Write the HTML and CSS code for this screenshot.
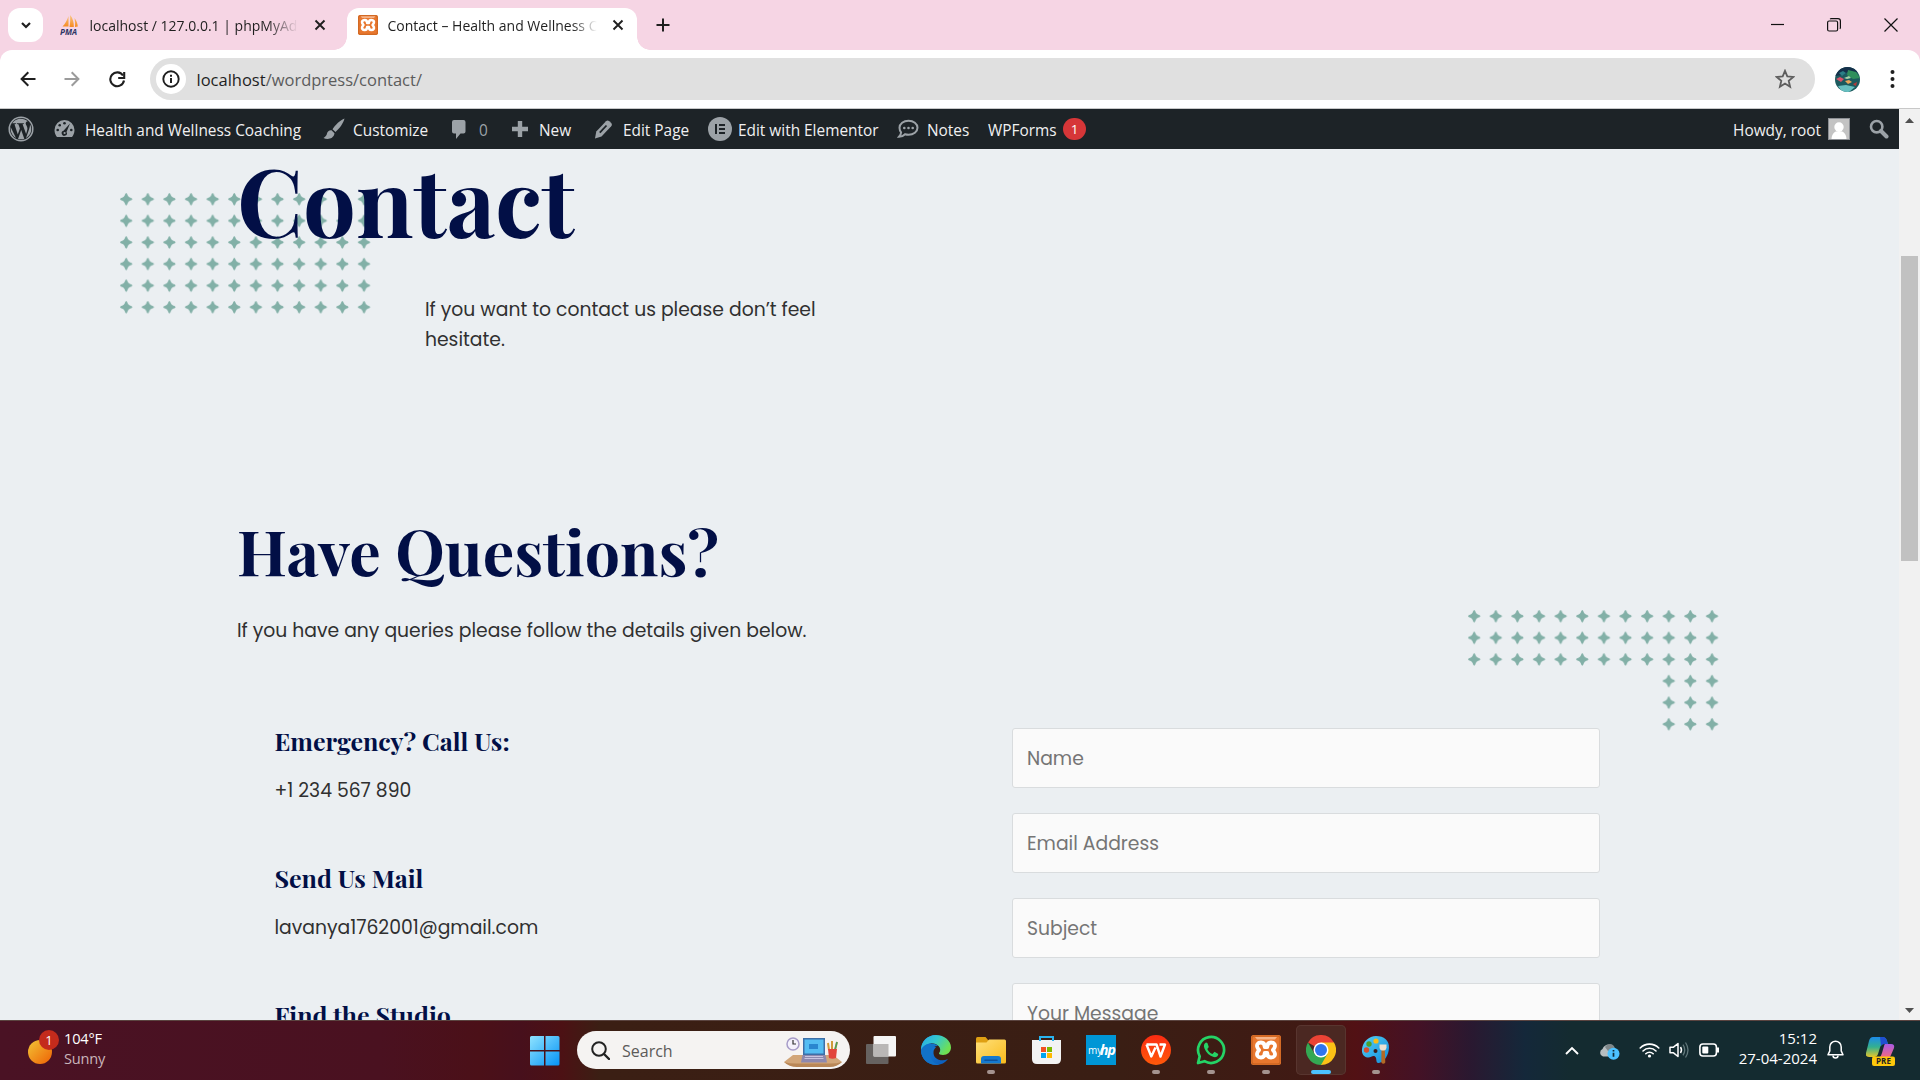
FILE: index.html
```
<!DOCTYPE html>
<html lang="en">
<head>
<meta charset="utf-8">
<title>Contact – Health and Wellness Coaching</title>
<link rel="stylesheet" href="styles.css">
</head>
<body>
<svg class="defs" width="0" height="0" aria-hidden="true">
  <defs>
    <pattern id="stars" width="21.62" height="21.6" patternUnits="userSpaceOnUse">
      <path d="M6.200 0Q7.200.3 7.600 2.200 8.300 4 10.200 4.700 12 5.100 12.400 6.200 12 7.300 10.200 7.700 8.300 8.400 7.600 10.200 7.200 12.100 6.200 12.400 5.200 12.100 4.800 10.200 4.100 8.400 2.200 7.700.4 7.300 0 6.200.4 5.100 2.200 4.700 4.100 4 4.800 2.200 5.200.3 6.200 0z" fill="#82b0a7"/>
    </pattern>
    <symbol id="xampp" viewBox="0 0 30 30">
      <rect width="30" height="30" rx="2.500" fill="#e8772e"/>
      <rect x="1" y="1" width="28" height="28" rx="2" fill="none" stroke="#c05f1c" stroke-width="1"/>
      <path d="M4 2h22l-2 2.500H6z" fill="#f6b58a"/>
      <path d="M10 7.500c-3.500 0-4.500 2.500-3.700 4.600.5 1.300 1.200 1.900 1.800 2.900-.6 1-1.300 1.600-1.800 2.900-.8 2.100.2 4.600 3.700 4.600 3.200 0 3.700-2.500 3.700-4.500h2.600c0 2 .5 4.500 3.700 4.500 3.500 0 4.500-2.500 3.700-4.600-.5-1.300-1.200-1.900-1.800-2.900.6-1 1.300-1.600 1.800-2.900.8-2.100-.2-4.600-3.700-4.600-3.200 0-3.700 2.500-3.700 4.500h-2.600c0-2-.5-4.500-3.700-4.500z" fill="none" stroke="#fff" stroke-width="3.800" stroke-linejoin="round"/>
    </symbol>
    <linearGradient id="gWin" x1="0" y1="0" x2="1" y2="1"><stop offset="0" stop-color="#8fe3ff"/><stop offset="1" stop-color="#0593f5"/></linearGradient>
    <linearGradient id="gSun" x1="0" y1="0" x2="1" y2="1"><stop offset="0" stop-color="#f3c436"/><stop offset="1" stop-color="#ee6104"/></linearGradient>
    <linearGradient id="gSail" x1="0" y1="0" x2="0" y2="1"><stop offset="0" stop-color="#f9c784"/><stop offset="1" stop-color="#f58a1f"/></linearGradient>
    <linearGradient id="gFolder" x1="0" y1="0" x2="1" y2="1"><stop offset="0" stop-color="#ffe07a"/><stop offset="1" stop-color="#f8bb1c"/></linearGradient>
    <linearGradient id="gEdge" x1="0" y1="0" x2="1" y2=".5"><stop offset="0" stop-color="#27a8e8"/><stop offset=".5" stop-color="#34c8cf"/><stop offset="1" stop-color="#6fe052"/></linearGradient>
    <linearGradient id="gEdge2" x1="0" y1="0" x2="1" y2="1"><stop offset="0" stop-color="#1b86e0"/><stop offset="1" stop-color="#0b5bb8"/></linearGradient>
    <linearGradient id="gWps" x1="0" y1="0" x2="0" y2="1"><stop offset="0" stop-color="#fb2b12"/><stop offset="1" stop-color="#ff5a0a"/></linearGradient>
    <linearGradient id="gPaint" x1="0" y1="0" x2="1" y2="1"><stop offset="0" stop-color="#54d2f8"/><stop offset="1" stop-color="#1289d8"/></linearGradient>
    <linearGradient id="gCopA" x1="0" y1="0" x2="0" y2="1"><stop offset="0" stop-color="#1c8bea"/><stop offset=".5" stop-color="#33b08f"/><stop offset="1" stop-color="#e6c52a"/></linearGradient>
    <linearGradient id="gCopB" x1="0" y1="0" x2="0" y2="1"><stop offset="0" stop-color="#a95be6"/><stop offset="1" stop-color="#f6697b"/></linearGradient>
    <clipPath id="disc"><circle cx="12.500" cy="12.500" r="12.500"/></clipPath>
  </defs>
</svg>

<div class="screen">
  <header class="tabstrip">
    <button class="tab-search"><svg width="12" height="12" viewBox="0 0 12 12"><path d="M2 4l4 4 4-4" fill="none" stroke="#1f1f1f" stroke-width="2.200"/></svg></button>
    <div class="tab">
      <svg class="favicon" width="20" height="20" viewBox="0 0 20 20"><path d="M8.500 1v10.500H2.500C5 9 7 5.500 8.500 1zM10 0c3 3 4 8 3.800 12H9.500C10.300 8 10.400 4 10 0zM14.500 3c2 2.500 3.200 6 3.300 8.500L15 12c.3-3 .1-6-.5-9z" fill="url(#gSail)"/><text x="0" y="19.500" class="pma-mark">PMA</text></svg>
      <span class="tab-title tab-title-a">localhost / 127.0.0.1 | phpMyAdmin</span>
      <svg class="tab-close" width="12" height="12" viewBox="0 0 12 12"><path d="M1.500 1.500l9 9M10.500 1.500l-9 9" stroke="#1f1f1f" stroke-width="1.900"/></svg>
    </div>
    <div class="tab tab-active">
      <svg class="favicon" width="20" height="20"><use href="#xampp"/></svg>
      <span class="tab-title tab-title-b">Contact – Health and Wellness Coaching</span>
      <svg class="tab-close" width="12" height="12" viewBox="0 0 12 12"><path d="M1.500 1.500l9 9M10.500 1.500l-9 9" stroke="#1f1f1f" stroke-width="1.900"/></svg>
    </div>
    <svg class="new-tab" width="14" height="14" viewBox="0 0 14 14"><path d="M7 .5v13M.5 7h13" stroke="#1f1f1f" stroke-width="2"/></svg>
    <div class="window-controls">
      <svg width="14" height="14" viewBox="0 0 14 14"><path d="M1 6.500h13" stroke="#111" stroke-width="1.200"/></svg>
      <svg width="14" height="14" viewBox="0 0 14 14"><rect x=".6" y="3" width="10" height="10" rx="1.500" fill="none" stroke="#111" stroke-width="1.200"/><path d="M3.200 1.200q.3-.6 1-.6H11q2.400 0 2.400 2.400v6.800q0 .6-.6 1" fill="none" stroke="#111" stroke-width="1.200"/></svg>
      <svg width="14" height="14" viewBox="0 0 14 14"><path d="M.5.500l13 13M13.500.500l-13 13" stroke="#111" stroke-width="1.200"/></svg>
    </div>
  </header>

  <nav class="toolbar">
    <svg class="nav-back" width="16" height="16" viewBox="0 0 16 16"><path d="M15.500 8H2M8.300 1.300L1.600 8l6.700 6.700" fill="none" stroke="#1f1f1f" stroke-width="2"/></svg>
    <svg class="nav-forward" width="16" height="16" viewBox="0 0 16 16"><path d="M.5 8H14M7.700 1.300L14.400 8l-6.700 6.700" fill="none" stroke="#9b9b9b" stroke-width="2"/></svg>
    <svg class="nav-reload" width="17" height="17" viewBox="0 0 17 17"><path d="M15 9.500A6.900 6.900 0 1 1 14 4.500" fill="none" stroke="#1f1f1f" stroke-width="2.100"/><path d="M15.200 1v6h-6" fill="none" stroke="#1f1f1f" stroke-width="2.100"/></svg>
    <div class="omnibox">
      <span class="site-info"><svg width="18" height="18" viewBox="0 0 18 18"><circle cx="9" cy="9" r="7.700" fill="none" stroke="#1f1f1f" stroke-width="1.900"/><path d="M9 8v5M9 4.800v2" stroke="#1f1f1f" stroke-width="2"/></svg></span>
      <span class="url"><b>localhost</b>/wordpress/contact/</span>
      <svg class="star" width="20" height="20" viewBox="0 0 20 20"><path d="M10 1.800l2.300 5.600 6 .5-4.600 3.900 1.400 5.900L10 14.500l-5.100 3.200 1.400-5.900L1.700 7.900l6-.5z" fill="none" stroke="#5e5e5e" stroke-width="1.800"/></svg>
    </div>
    <svg class="profile" width="25" height="25" viewBox="0 0 25 25"><g clip-path="url(#disc)"><rect width="25" height="25" fill="#1c5a5e"/><path d="M0 0h25v6L14 4 8 8 0 9z" fill="#14304a"/><path d="M13 3l8 2 4 6-7 1-6-4z" fill="#2f8f5c"/><path d="M1 12l4-2 4 2-3 3z" fill="#d8526a"/><path d="M10 14l4-1 3 2-4 2z" fill="#e9a55a"/><path d="M18 17l4-2-1 4-2-1z" fill="#b33a3a"/><path d="M3 19l8-1 9 2-6 5H7z" fill="#67bfc0"/><path d="M9 11l5-2 2 2-4 1z" fill="#a5d3a8"/><path d="M4 6l4-2 3 2-4 3z" fill="#2a7f86"/></g></svg>
    <svg class="kebab" width="5" height="18" viewBox="0 0 5 18"><circle cx="2.500" cy="2" r="2"/><circle cx="2.500" cy="9" r="2"/><circle cx="2.500" cy="16" r="2"/></svg>
  </nav>

  <div class="viewport">
    <div class="page">
      <div class="adminbar">
        <svg class="ab-wp" width="26" height="26" viewBox="0 0 26 26"><circle cx="13" cy="13" r="11.800" fill="none" stroke="#9ca2a7" stroke-width="1.500"/><path d="M3 9.300C4.700 5.300 8.500 2.700 13 2.700c2.600 0 5 1 6.800 2.500-1.600.2-2.300 1.400-2.100 2.600.2 1.400 1.700 2.400 1.700 4.700 0 1.500-.7 3.500-1.300 5.500L14.600 8.300l1.300-.2v-.8H8.900v.8l1.500.2 1.500 4.100-2.100 6.100L6.500 8.300l1.400-.2v-.8H4.300z" fill="#9ca2a7"/><path d="M2.600 11L8 22C4.800 20.200 2.600 16.900 2.600 13zM13.200 14l3.100 8.700c-2 .8-4.300.8-6.300.2zM22 8.300c2.700 5 1 10.900-4 13.800l3-8.600c.7-2 1-3.600 1-5.200z" fill="#9ca2a7"/></svg>
        <svg class="ab-gauge" width="21" height="20" viewBox="0 0 21 20"><path d="M10.500 1A10 10 0 0 0 .5 11c0 3 1.200 5.400 2.500 7h15c1.300-1.600 2.500-4 2.500-7a10 10 0 0 0-10-10z" fill="#9ca2a7"/><g fill="#1d2327"><circle cx="10.500" cy="4.200" r="1.300"/><circle cx="5.700" cy="6.200" r="1.300"/><circle cx="3.700" cy="11" r="1.300"/><circle cx="17.300" cy="11" r="1.300"/><path d="M16 4.500l-3.500 8.400a2.600 2.600 0 1 1-3-1.100z"/></g><circle cx="10.600" cy="14" r="1.100" fill="#9ca2a7"/></svg>
        <span class="ab-site">Health and Wellness Coaching</span>
        <svg class="ab-brush" width="22" height="22" viewBox="0 0 22 22"><path d="M21.500.5c-4 1.500-9.500 6.500-12 10.800l3 2.700C16.500 10.500 20.500 5 21.500.5zM8.500 12.300c-2.500-.2-4 1.200-4.500 3.300-.5 2-1.500 3.400-3.500 4.400 3.500 1.800 10 1.500 11-4.700z" fill="#9ca2a7"/></svg>
        <span class="ab-customize">Customize</span>
        <svg class="ab-comment" width="18" height="21" viewBox="0 0 18 21"><path d="M3 1h9.500A2 2 0 0 1 14.500 3v9.500a2 2 0 0 1-2 2H9.500L5 20v-5.500H3a2 2 0 0 1-2-2V3a2 2 0 0 1 2-2z" fill="#9ca2a7"/></svg>
        <span class="ab-count">0</span>
        <svg class="ab-plus" width="18" height="18" viewBox="0 0 18 18"><path d="M6.800 1h4.400v5.800H17v4.400h-5.800V17H6.800v-5.800H1V6.800h5.800z" fill="#9ca2a7"/></svg>
        <span class="ab-new">New</span>
        <svg class="ab-pencil" width="19" height="19" viewBox="0 0 19 19"><path d="M12 1.300q1.500-1.500 3.300 0l1.700 1.500q1.700 1.700.2 3.500L7.500 16.400 1 18.500l1.300-7z" fill="#9ca2a7"/><path d="M12.500 5.500L5.800 12.700" stroke="#1d2327" stroke-width="1.800"/></svg>
        <span class="ab-edit">Edit Page</span>
        <svg class="ab-elementor" width="24" height="24" viewBox="0 0 24 24"><circle cx="12" cy="12" r="12" fill="#9ca2a7"/><path d="M7 7h2v10H7zM11 7h6v2h-6zM11 11h6v2h-6zM11 15h6v2h-6z" fill="#1d2327"/></svg>
        <span class="ab-elementor-label">Edit with Elementor</span>
        <svg class="ab-bubble" width="22" height="20" viewBox="0 0 22 20"><path d="M11.500 1.700c5 0 9 3 9 7s-4 7-9 7c-1.200 0-2.400-.2-3.400-.5-1.600 1.600-3.700 2.600-6.100 2.600 1.300-1.300 2-2.700 2.100-4.400C3 12 2.500 10.500 2.500 8.700c0-4 4-7 9-7z" fill="none" stroke="#9ca2a7" stroke-width="2"/><circle cx="7.300" cy="9" r="1.300" fill="#9ca2a7"/><circle cx="11.500" cy="9" r="1.300" fill="#9ca2a7"/><circle cx="15.700" cy="9" r="1.300" fill="#9ca2a7"/></svg>
        <span class="ab-notes">Notes</span>
        <span class="ab-wpforms">WPForms</span>
        <span class="ab-badge">1</span>
        <span class="ab-howdy">Howdy, root</span>
        <svg class="ab-avatar" width="22" height="22" viewBox="0 0 22 22"><rect x=".5" y=".5" width="21" height="21" fill="#c3c3c3" stroke="#8c8f94"/><circle cx="11" cy="9" r="4.700" fill="#fff"/><path d="M3.500 21c.3-4.500 2.500-8 7.500-8s7.200 3.500 7.500 8z" fill="#fff"/></svg>
        <svg class="ab-search" width="20" height="20" viewBox="0 0 20 20"><circle cx="7.700" cy="7.700" r="5.700" fill="none" stroke="#9ca2a7" stroke-width="2.600"/><path d="M12 12l5.500 5.500" stroke="#9ca2a7" stroke-width="4" stroke-linecap="round"/></svg>
      </div>

      <main class="content">
        <svg class="pattern pattern-top" width="251" height="122" aria-hidden="true"><rect width="251" height="122" fill="url(#stars)"/></svg>
        <svg class="pattern pattern-side" width="251" height="122" aria-hidden="true"><path d="M0 0h251v122h-57V60H0z" fill="url(#stars)"/></svg>
        <h1>Contact</h1>
        <p class="intro">If you want to contact us please don’t feel hesitate.</p>
        <h2>Have Questions?</h2>
        <p class="lead">If you have any queries please follow the details given below.</p>
        <div class="columns">
          <section class="details">
            <div class="detail"><h3>Emergency? Call Us:</h3><p>+1 234 567 890</p></div>
            <div class="detail"><h3>Send Us Mail</h3><p>lavanya1762001@gmail.com</p></div>
            <div class="detail"><h3>Find the Studio</h3></div>
          </section>
          <form class="form">
            <input type="text" placeholder="Name">
            <input type="text" placeholder="Email Address">
            <input type="text" placeholder="Subject">
            <input type="text" placeholder="Your Message">
          </form>
        </div>
      </main>
    </div>
    <div class="scrollbar">
      <svg width="9" height="5" viewBox="0 0 9 5"><path d="M0 5L4.500 0 9 5z" fill="#505050"/></svg>
      <div class="thumb"></div>
      <svg class="down" width="9" height="5" viewBox="0 0 9 5"><path d="M0 0l4.500 5L9 0z" fill="#505050"/></svg>
    </div>
  </div>

  <footer class="taskbar">
    <div class="weather">
      <svg width="32" height="36" viewBox="0 0 32 36"><circle cx="12" cy="23" r="12" fill="url(#gSun)"/><circle cx="21" cy="11" r="10" fill="#c42b1c"/><text x="21" y="15.800" text-anchor="middle" class="weather-badge">1</text></svg>
      <div class="weather-text"><span>104°F</span><span class="dim">Sunny</span></div>
    </div>
    <svg class="start" width="30" height="30" viewBox="0 0 30 30"><path d="M1.500 0H14v14H0V1.500Q0 0 1.500 0zM15.500 0H28q1.500 0 1.500 1.500V14h-14zM0 15.500h14V29.500H1.500Q0 29.500 0 28zM15.500 15.500h14V28q0 1.500-1.500 1.500H15.500z" fill="url(#gWin)"/></svg>
    <div class="search">
      <svg width="19" height="19" viewBox="0 0 19 19"><circle cx="8" cy="8" r="6.800" fill="none" stroke="#222" stroke-width="2"/><path d="M13 13l5 5" stroke="#222" stroke-width="2.400" stroke-linecap="round"/></svg>
      <span>Search</span>
      <svg class="desk" width="60" height="32" viewBox="0 0 60 32"><path d="M10 19h40l9 7q-5 4-12 4H14Q6 30 1 26z" fill="#d2a679"/><path d="M1 26q5 1.500 12 1.500h34q7 0 12-1.500-5 5-12 5H14Q6 31 1 26z" fill="#b98757"/><circle cx="10" cy="8" r="6" fill="#f4f1fb" stroke="#a79cc8" stroke-width="1.500"/><path d="M10 4v4h3" fill="none" stroke="#333" stroke-width="1.200"/><path d="M20 2h22v17H20z" fill="#3c6fa8"/><path d="M21.500 3.500h19v14h-19z" fill="#54bdf2"/><path d="M26 8h9v5h-9z" fill="#2a86cf"/><path d="M19.500 19h23l1.500 7.500H18z" fill="#8d88ae"/><path d="M22 20.500h18M21.500 22.500h19" stroke="#c9c5e0"/><path d="M46 14l-1-7M49 14V5M52 14l2-8" stroke="#d09a3a" stroke-width="2"/><path d="M52 14l2-8" stroke="#4a9d61" stroke-width="1.600"/><path d="M45 13h9l-1 9q-3.500 1.500-7 0z" fill="#e2453c"/></svg>
    </div>
    <div class="apps">
      <div class="app"><svg width="30" height="28" viewBox="0 0 30 28"><rect x="0" y="8" width="22.500" height="20" rx="1" fill="#666260"/><rect x="7.500" y="0" width="22.500" height="20.500" rx="1" fill="#f5f5f5"/><rect x="7.500" y="8" width="15" height="12.500" fill="#b9b7b6"/></svg></div>
      <div class="app"><svg width="30" height="30" viewBox="0 0 30 30"><path d="M15 0C6.500 0 0 6.500 0 15s6.700 15 15 15c5 0 9.300-2.300 12-6-7 3.500-15 0-14.500-7 .1-2 1-3.500 2.500-4.500L9 8z" fill="url(#gEdge2)"/><path d="M0 15C0 6.500 6.500 0 15 0s15 6 15 12.500c0 4.500-3.500 7.500-8 7.500-2.500 0-4.500-.8-4-2 1.500-1.500 1.800-4.500-.2-6.800C13 6 3 8 0 15z" fill="url(#gEdge)"/><path d="M9.500 19c0 6 4 10.500 9 10.500-10 2-18.500-5-18.500-14C2 10.500 6.500 8.300 11 8.500c2.500.1 4.500 1 6 2.600-4-.6-7.500 3-7.500 7.900z" fill="#1272c8"/></svg></div>
      <div class="app running"><svg width="30" height="27" viewBox="0 0 30 27"><path d="M0 1.500Q0 0 1.500 0H9.500l3 3.500V12H0z" fill="#dfa013"/><path d="M0 5.500h10.500L13 2.500h15.500q1.500 0 1.500 1.500v21q0 1.500-1.500 1.500h-27Q0 26.500 0 25z" fill="url(#gFolder)"/><path d="M5 26.500V22q0-3 3-3h14q3 0 3 3v4.500z" fill="#1479cf"/><path d="M9 23.200h12" stroke="#0d529b" stroke-width="1.600" stroke-linecap="round"/></svg></div>
      <div class="app"><svg width="29" height="30" viewBox="0 0 29 30"><path d="M0 5h29v19q0 5-5 5H5q-5 0-5-5z" fill="#f3f3f3"/><path d="M9 12h5v5H9z" fill="#f25022"/><path d="M15 12h5v5h-5z" fill="#7fba00"/><path d="M9 18h5v5H9z" fill="#00a4ef"/><path d="M15 18h5v5h-5z" fill="#ffb900"/><path d="M8 6V2h13v4" fill="none" stroke="#29b4ef" stroke-width="2"/></svg></div>
      <div class="app"><svg width="30" height="30" viewBox="0 0 30 30"><rect width="30" height="30" fill="#0096d6"/><text x="2" y="18.500" class="myhp-a">my</text><text x="14" y="20" class="myhp-b">hp</text></svg></div>
      <div class="app running"><svg width="30" height="30" viewBox="0 0 30 30"><circle cx="15" cy="15" r="15" fill="url(#gWps)"/><path d="M5.500 9.500h10l4 12 4.500-12h-5.500M5.500 9.500l4.800 12 4.200-9" fill="none" stroke="#fff" stroke-width="2.400" stroke-linejoin="round"/></svg></div>
      <div class="app running"><svg width="30" height="30" viewBox="0 0 30 30"><path d="M2 28l1.700-6.700A13 13 0 1 1 8.500 26.200z" fill="none" stroke="#25d366" stroke-width="2.700" stroke-linejoin="round"/><path d="M10 7.500c-2 1-2.700 3.200-1.500 6 1.800 4.200 5 7.400 9.200 8.600 2.300.5 4.300-.8 4.600-3.200l-3.800-2.100-2 2.100c-2.400-.9-4.300-2.800-5.200-5l1.500-1.900-1.400-4z" fill="#25d366"/></svg></div>
      <div class="app running"><svg width="30" height="30"><use href="#xampp"/></svg></div>
      <div class="app running current"><svg width="30" height="30" viewBox="0 0 30 30"><path d="M15 15L2 7.500A15 15 0 0 1 28 7.500z" fill="#ea4335"/><path d="M15 15L28 7.500A15 15 0 0 1 15 30z" fill="#fbc116"/><path d="M15 7.500h13L21.500 19 15 30z" fill="#fbc116"/><path d="M2 7.500A15 15 0 0 0 15 30l6.500-11.200L15 15 8.500 18.800z" fill="#34a853"/><circle cx="15" cy="15" r="7.500" fill="#fff"/><circle cx="15" cy="15" r="6" fill="#2f75ee"/></svg></div>
      <div class="app running"><svg width="30" height="30" viewBox="0 0 30 30"><path d="M15 1c8 0 13.500 4.500 13 12-.4 7-4.500 14-10 15-4 .7-1.500-5-4-6.500-2.500-1.600-4 1.500-7.500 1C2.500 22 .5 18.500 1 14 2 6.500 8 1 15 1z" fill="url(#gPaint)"/><circle cx="15" cy="6" r="2.600" fill="#f9bc16"/><circle cx="8" cy="9" r="2.700" fill="#4ba02c"/><circle cx="5.500" cy="15" r="2.700" fill="#d64f30"/><circle cx="14.500" cy="16" r="2" fill="#3a1b17"/><path d="M20.500 14h3.300l.5 13.500q-2 2.500-4 0z" fill="#b26a26"/><path d="M18.500 9.500h7v3q-.5 3-2.500 3h-2q-2 0-2.500-3z" fill="#ece2d2"/></svg></div>
    </div>
    <div class="tray">
      <svg class="tray-up" width="14" height="9" viewBox="0 0 14 9"><path d="M1 8l6-6 6 6" fill="none" stroke="#fff" stroke-width="1.900"/></svg>
      <svg class="tray-cloud" width="21" height="17" viewBox="0 0 21 17"><path d="M4 13.500a4 4 0 0 1-.5-7.500C5 2 9 .5 12.500 2c2 .8 3 2.300 3.300 4 3 .3 3.700 7.500-.3 7.500z" fill="#b8bec0"/><path d="M6 4C9-.5 15 0 16 6L9 8z" fill="#7f8789"/><circle cx="14.500" cy="10.800" r="6" fill="#4cc2ff"/><path d="M14.500 9.800v4M14.500 7v1.600" stroke="#102a35" stroke-width="1.700"/></svg>
      <svg class="tray-wifi" width="21" height="16" viewBox="0 0 21 16"><g fill="none" stroke="#fff" stroke-width="1.600" stroke-linecap="round"><path d="M1.200 6a13 13 0 0 1 18.600 0M4 9a9.200 9.200 0 0 1 13 0M6.800 11.700a5.300 5.300 0 0 1 7.400 0"/></g><circle cx="10.500" cy="14" r="1.600" fill="#fff"/></svg>
      <svg class="tray-sound" width="20" height="18" viewBox="0 0 20 18"><path d="M1 6.200h3.500L9 2.500v13L4.500 11.800H1z" fill="none" stroke="#fff" stroke-width="1.500" stroke-linejoin="round"/><path d="M11.500 6q2 3 0 6" fill="none" stroke="#fff" stroke-width="1.500"/><path d="M14 3.700q3.500 5.300 0 10.600M16.500 1.500q5 7.500 0 15" fill="none" stroke="#61777a" stroke-width="1.300"/></svg>
      <svg class="tray-battery" width="21" height="14" viewBox="0 0 21 14"><rect x=".9" y="1" width="16.500" height="12" rx="3" fill="none" stroke="#fff" stroke-width="1.600"/><rect x="3.300" y="3.500" width="6" height="7" rx="1" fill="#fff"/><path d="M19 4.500v5" stroke="#fff" stroke-width="2"/></svg>
      <div class="clock"><span>15:12</span><span>27-04-2024</span></div>
      <svg class="tray-bell" width="17" height="20" viewBox="0 0 17 20"><path d="M8.500 1.200a5.700 5.700 0 0 0-5.700 5.700v4L1 14.700h15l-1.800-3.800v-4a5.700 5.700 0 0 0-5.700-5.700z" fill="none" stroke="#fff" stroke-width="1.500" stroke-linejoin="round"/><path d="M6 15.500a2.500 2.500 0 0 0 5 0" fill="none" stroke="#fff" stroke-width="1.500"/></svg>
      <svg class="tray-copilot" width="30" height="29" viewBox="0 0 30 29"><path d="M7 0h9q4 0 5 4l1 3h-4q-3 0-4 3.500L12 17q-1 3-4 3H3q-4 0-3-4L3 4q1-4 4-4z" fill="url(#gCopA)"/><path d="M14 0h3q3 0 4 4l1 3h-4q-2 0-3 2z" fill="#1f4fd0"/><path d="M19 7h6q4 0 3 4l-3 7q-1 3-4 3h-8q2-1 3-5l2-7q.5-2 1-2z" fill="url(#gCopB)"/><rect x="6" y="19.500" width="23" height="9.500" rx="2" fill="#fdc80b"/><text x="17.500" y="27.200" text-anchor="middle" class="pre">PRE</text></svg>
    </div>
  </footer>
</div>
</body>
</html>
```
FILE: styles.css
```
* { box-sizing: border-box; }
body { margin: 0; font-family: "Open Sans", "Noto Sans", sans-serif; }
h1, h2, h3, p { margin: 0; }
svg { display: block; flex: none; }
.defs { position: absolute; }
.screen { width: 1920px; height: 1080px; display: flex; flex-direction: column; overflow: hidden; background: #f6d5e4; }

/* browser tabs */
.tabstrip { height: 50px; flex: none; display: flex; align-items: center; background: #f6d5e4; }
.tab-search { width: 35px; height: 34px; margin-left: 8px; padding: 0; border: 0; border-radius: 12px; background: #fff; display: flex; align-items: center; justify-content: center; }
.tab { display: flex; align-items: center; width: 304px; height: 42px; padding: 0 21px 0 17px; align-self: flex-end; }
.tab-active { position: relative; width: 290px; padding: 0 13px 0 11px; background: #fff; border-radius: 12px 12px 0 0; }
.tab-active::before, .tab-active::after { content: ""; position: absolute; bottom: 0; width: 13px; height: 13px; }
.tab-active::before { left: -13px; background: radial-gradient(circle at 0 0, transparent 12.5px, #fff 13px); }
.tab-active::after { right: -13px; background: radial-gradient(circle at 100% 0, transparent 12.5px, #fff 13px); }
.favicon { margin-bottom: 8px; }
.tab-title { font-size: 14px; line-height: 20px; margin: 0 0 7px 9.5px; white-space: nowrap; overflow: hidden; color: #1f1f1f; }
.tab-title-a { width: 208px; margin-right: auto; -webkit-mask-image: linear-gradient(90deg, #000 85%, transparent); mask-image: linear-gradient(90deg, #000 85%, transparent); }
.tab-title-b { width: 209px; margin-right: auto; -webkit-mask-image: linear-gradient(90deg, #000 88%, transparent); mask-image: linear-gradient(90deg, #000 88%, transparent); }
.tab-close { margin-bottom: 8px; }
.pma-mark { font: italic 700 8px "Open Sans", sans-serif; fill: #2e3564; }
.new-tab { margin-left: 19px; }
.window-controls { margin: 0 22px 0 auto; display: flex; gap: 43px; }

/* address bar */
.toolbar { height: 59px; flex: none; display: flex; align-items: center; background: #fff; border-bottom: 1px solid #c8c8c8; border-radius: 12px 12px 0 0; }
.nav-back { margin-left: 20px; }
.nav-forward { margin-left: 28px; }
.nav-reload { margin-left: 29px; }
.omnibox { display: flex; align-items: center; width: 1665px; height: 42px; margin-left: 24px; padding: 0 20px 0 6px; border-radius: 21px; background: #e0e0e0; }
.site-info { width: 30px; height: 30px; border-radius: 50%; background: #fff; display: flex; align-items: center; justify-content: center; }
.url { margin-left: 10.500px; font-size: 16.5px; color: #5c5c5c; }
.url b { font-weight: 400; color: #1f1f1f; }
.star { margin-left: auto; }
.profile { margin-left: 20px; }
.kebab { margin-left: 30px; fill: #1f1f1f; }

/* page and scrollbar */
.viewport { flex: 1; min-height: 0; display: flex; }
.page { width: 1899px; display: flex; flex-direction: column; overflow: hidden; }
.scrollbar { width: 21px; background: #f1f1f1; display: flex; flex-direction: column; align-items: center; padding: 9px 0 7px; }
.thumb { width: 17px; height: 305px; margin-top: 133px; background: #c1c1c1; }
.down { margin-top: auto; }

/* admin bar */
.adminbar { height: 40px; flex: none; display: flex; align-items: center; background: #1d2327; color: #f0f0f1; font-size: 15.4px; white-space: nowrap; }
.adminbar span { flex: none; line-height: 40px; padding-top: 2px; height: 40px; }
.ab-wp { margin-left: 8px; }
.ab-gauge { margin-left: 20px; }
.ab-site { margin-left: 10px; width: 238px; }
.ab-customize { margin-left: 8px; width: 98px; }
.ab-count { margin-left: 10px; width: 32px; color: #9ca2a7; }
.ab-new { margin-left: 10px; width: 55px; }
.ab-edit { margin-left: 10px; width: 85px; }
.ab-elementor-label { margin-left: 6px; width: 159px; }
.ab-notes { margin-left: 8px; width: 61px; }
.ab-wpforms { width: 75px; }
.adminbar .ab-badge { width: 23px; height: 22px; padding: 0; line-height: 22px; border-radius: 11px; background: #d63638; color: #fff; font-size: 13.5px; text-align: center; }
.ab-howdy { margin-left: auto; }
.ab-avatar { margin-left: 7px; }
.ab-search { margin: 0 10px 0 19px; }

/* contact page */
.content { position: relative; flex: 1; min-height: 0; padding: 3.5px 299px 0 237px; background: #ebeff2; color: #303030; font-family: Poppins, Inter, "Open Sans", sans-serif; font-size: 18.75px; line-height: 30px; overflow: hidden; }
.content h1, .content h2, .content h3 { position: relative; font-family: "Playfair Display", "Liberation Serif", serif; font-weight: 700; line-height: 1; color: #020f46; }
.content h1 { font-size: 93.75px; }
.content h2 { font-size: 62.5px; margin-top: 164px; }
.content h3 { font-size: 25px; }
.pattern { position: absolute; }
.pattern-top { left: 120px; top: 44px; }
.pattern-side { left: 1468px; top: 461px; }
.intro { width: 420px; margin: 49px 0 0 188px; }
.lead { margin-top: 34.5px; }
.columns { display: grid; grid-template-columns: 737.5px 588px; margin: 82px 0 0 37.5px; }
.details { display: flex; flex-direction: column; gap: 59.5px; }
.detail p { margin-top: 22.5px; }
.form { display: flex; flex-direction: column; gap: 25px; }
.form input { width: 588px; height: 60px; padding: 0 14px; border: 1px solid #d9dcde; border-radius: 3px; background: #fafafa; font: inherit; }
.form input::placeholder { color: #757575; opacity: 1; }

/* taskbar */
.taskbar { height: 60px; flex: none; display: flex; align-items: center; color: #fff; box-shadow: inset 0 1px #5b4440; background: linear-gradient(90deg, #4a1224 0, #4a1120 380px, #4b1018 480px, #47101c 520px, #4c1114 562px, #3b1f14 600px, #3a1e14 1120px, #401a14 1300px, #521114 1355px, #431226 1420px, #2a1830 1470px, #14283a 1525px, #142b30 1570px, #142b30 1920px); }
.weather { display: flex; align-items: center; gap: 4px; margin-left: 28px; width: 502px; }
.weather svg { margin-bottom: 6px; }
.weather-text { display: flex; flex-direction: column; font-size: 14.6px; line-height: 20px; letter-spacing: -.2px; margin-bottom: 4px; }
.weather-badge { font-size: 13px; fill: #fff; }
.dim { color: #c9b5bb; }
.start { margin-top: 1px; }
.search { width: 273px; height: 38px; margin-left: 17px; padding: 0 7px 0 14px; border-radius: 19px; background: #f5f3f2; display: flex; align-items: center; color: #5c5a59; font-size: 16px; }
.search span { margin: 1px 0 0 12px; }
.desk { margin: 4px 0 0 auto; }
.apps { display: flex; margin-left: 6px; }
.app { position: relative; width: 50px; height: 50px; margin-right: 5px; display: flex; align-items: center; justify-content: center; border-radius: 5px; }
.running::after { content: ""; position: absolute; bottom: 1px; left: 21px; width: 8px; height: 4px; border-radius: 2px; background: #a4938f; }
.current { background: #4b2822; box-shadow: inset 0 0 0 1px #58352f; }
.current::after { left: 15px; width: 20px; background: #4cc2ff; }
.tray { display: flex; align-items: center; margin-left: auto; padding-right: 24px; }
.tray-up { margin-right: -1px; }
.tray-cloud { margin: 2px 0 0 21px; }
.tray-wifi { margin-left: 19px; }
.tray-sound { margin-left: 9px; }
.tray-battery { margin-left: 10px; }
.clock { display: flex; flex-direction: column; align-items: flex-end; width: 97px; font-size: 15px; line-height: 20px; margin-bottom: 4px; }
.tray-bell { margin-left: 10px; }
.tray-copilot { margin-left: 22px; margin-top: 2px; }
.pre { font: 700 8px "Open Sans", sans-serif; fill: #222; }
.myhp-a { font: 10px "Open Sans", sans-serif; fill: #fff; }
.myhp-b { font: italic 700 14px "Open Sans", sans-serif; fill: #fff; letter-spacing: -1px; }
```
